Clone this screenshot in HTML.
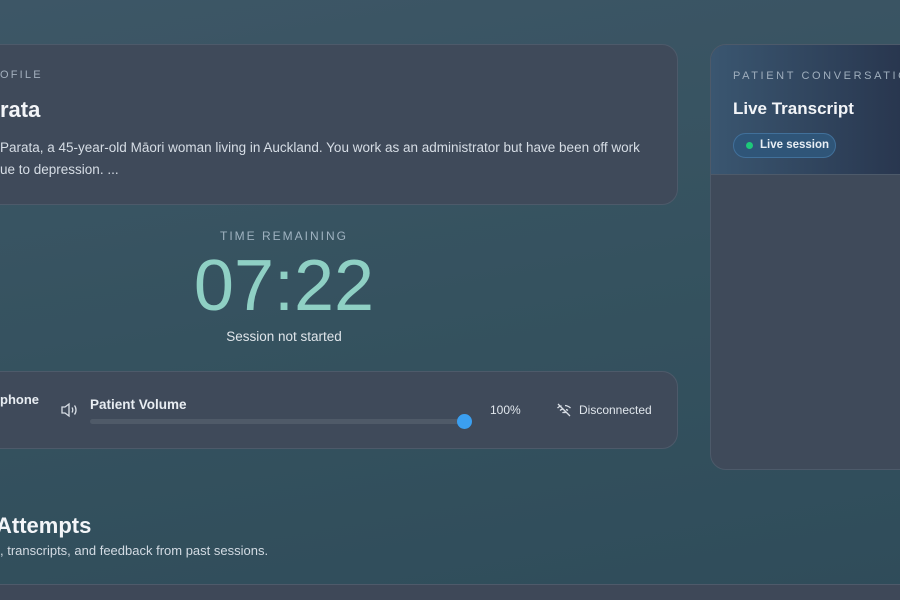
<!DOCTYPE html>
<html><head><style>
*{margin:0;padding:0;box-sizing:border-box}
body{width:900px;height:600px;overflow:hidden;position:relative;font-family:"Liberation Sans",sans-serif;color:#e8edf2;background:linear-gradient(170deg,#3d5666 0%,#35525f 50%,#2f4c5a 100%)}
.card{position:absolute;background:#3f4a5a;border:1px solid #4d5a6a;border-radius:16px}
.abs{position:absolute;white-space:nowrap}
</style></head><body>
<div class="card" style="left:-30px;top:44px;width:708px;height:161px"></div>
<div class="abs" style="left:0;top:69px;font-size:11px;letter-spacing:2.2px;color:#a3afbd">OFILE</div>
<div class="abs" style="left:0;top:97px;font-size:22px;font-weight:bold;color:#f3f5f8">rata</div>
<div class="abs" style="left:0;top:137px;font-size:13.5px;color:#d6dde5;line-height:22px">Parata, a 45-year-old Māori woman living in Auckland. You work as an administrator but have been off work<br>ue to depression. ...</div>

<div class="abs" style="left:184px;width:200px;text-align:center;top:229px;font-size:12px;letter-spacing:2px;color:#9fb2c0">TIME REMAINING</div>
<div class="abs" style="left:134px;width:300px;text-align:center;top:247px;font-size:72px;color:#8fd0c4;line-height:78px">07:22</div>
<div class="abs" style="left:184px;width:200px;text-align:center;top:329px;font-size:13.5px;color:#dfe5ea">Session not started</div>

<div class="card" style="left:-30px;top:371px;width:708px;height:78px"></div>
<div class="abs" style="left:0;top:392px;font-size:13px;font-weight:bold">phone</div>
<svg class="abs" style="left:60px;top:402px" width="18" height="16" viewBox="0 0 18 16" fill="none" stroke="#d8dee5" stroke-width="1.3"><path d="M2 5h3l4-3v12l-4-3H2z"/><path d="M12 5.5c1 1.3 1 3.7 0 5M14.5 3.5c2 2.5 2 6.5 0 9"/></svg>
<div class="abs" style="left:90px;top:397px;font-size:13.5px;font-weight:bold">Patient Volume</div>
<div class="abs" style="left:90px;top:419px;width:375px;height:5px;border-radius:3px;background:#4f5a68"></div>
<div class="abs" style="left:457px;top:414px;width:15px;height:15px;border-radius:50%;background:#3b9ff0"></div>
<div class="abs" style="left:490px;top:403px;font-size:12px;color:#e0e6ec">100%</div>
<svg class="abs" style="left:556px;top:402px" width="16" height="16" viewBox="0 0 16 16" fill="none" stroke="#d8dee5" stroke-width="1.3"><path d="M2 2l12 12M1.5 6a9 9 0 0 1 4-2.2M9 3.5a9 9 0 0 1 5.5 2.5M4 8.5a5 5 0 0 1 2.5-1.3M10 7.5a5 5 0 0 1 2 1M6.5 11a2 2 0 0 1 3 0"/></svg>
<div class="abs" style="left:579px;top:403px;font-size:12px;color:#e0e6ec">Disconnected</div>

<div class="abs" style="left:-4px;top:513px;font-size:22px;font-weight:bold;color:#f3f5f8">Attempts</div>
<div class="abs" style="left:0;top:543px;font-size:13px;color:#d3dbe3">, transcripts, and feedback from past sessions.</div>
<div class="abs" style="left:0;top:584px;width:900px;height:16px;background:#3e4858;border-top:1px solid #4e5a6a"></div>

<div class="abs" style="left:710px;top:44px;width:220px;height:426px;border-radius:16px;background:#3f4a5a;border:1px solid #4d5a6a;overflow:hidden">
<div style="height:130px;background:linear-gradient(90deg,#3a5670,#26324a);border-bottom:1px solid #4d5a6a"></div>
</div>
<div class="abs" style="left:733px;top:70px;font-size:11px;letter-spacing:2.6px;color:#9faebd">PATIENT CONVERSATIO</div>
<div class="abs" style="left:733px;top:99px;font-size:17px;font-weight:bold;color:#f3f5f8">Live Transcript</div>
<div class="abs" style="left:733px;top:133px;width:103px;height:25px;border-radius:13px;background:#2f5578;border:1px solid #41709a"></div>
<div class="abs" style="left:746px;top:142px;width:7px;height:7px;border-radius:50%;background:#1dc97a"></div>
<div class="abs" style="left:760px;top:139px;font-size:11.5px;font-weight:bold;color:#e8eef4">Live session</div>
</body></html>
